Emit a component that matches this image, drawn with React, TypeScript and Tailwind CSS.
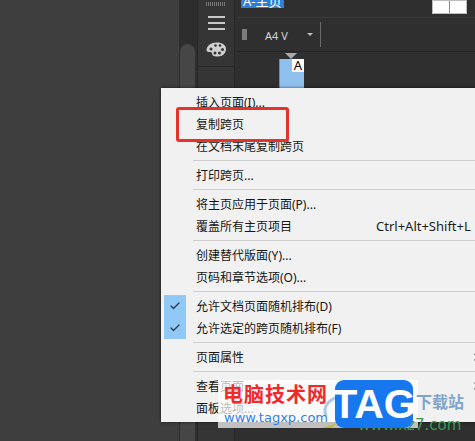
import { Check, ChevronRight } from 'lucide-react';

type MenuRow = { label: string; shortcut?: string; checked?: boolean; submenu?: boolean };

const groups: MenuRow[][] = [
    [{ label: '插入页面(I)...' }, { label: '复制跨页' }, { label: '在文档末尾复制跨页' }],
    [{ label: '打印跨页...' }],
    [{ label: '将主页应用于页面(P)...' }, { label: '覆盖所有主页项目', shortcut: 'Ctrl+Alt+Shift+L' }],
    [{ label: '创建替代版面(Y)...' }, { label: '页码和章节选项(O)...' }],
    [
        { label: '允许文档页面随机排布(D)', checked: true },
        { label: '允许选定的跨页随机排布(F)', checked: true },
    ],
    [{ label: '页面属性', submenu: true }],
    [{ label: '查看页面', submenu: true }, { label: '面板选项...' }],
];

function Row({ row }: { row: MenuRow }) {
    return (
        <div className="flex h-[22px] items-center">
            <div className={row.checked ? 'flex h-full w-[22px] items-center justify-center bg-[#90c8f6]' : 'h-full w-[22px]'}>
                {row.checked && <Check className="h-3 w-3 text-[#2a3a4a]" strokeWidth={2.5} />}
            </div>
            <span className="ml-[10px] pt-[2px] text-xs text-[#161616]">{row.label}</span>
            {row.shortcut && <span className="absolute left-[215px] pt-[2px] text-[13px] text-[#1c1c1c]">{row.shortcut}</span>}
            {row.submenu && <ChevronRight className="absolute left-[309px] h-3 w-3 text-[#333333]" />}
        </div>
    );
}

function PaletteIcon() {
    return (
        <svg width="20" height="15" viewBox="0 0 20 15">
            <path
                d="M11 0.5C5 0.5 0.5 4 0.5 8c0 2 2.5 2 4 2 1.5 0 1.5 1.5 2 3 .5 1.5 3 1.5 5.5 1.5 4.5 0 8-3 8-7.500C20 3 16 .5 11 .5z"
                fill="#cfcfcf"
            />
            <circle cx="5" cy="7" r="1.5" fill="#333333" />
            <circle cx="9" cy="11" r="1.5" fill="#333333" />
            <circle cx="13.5" cy="11" r="1.5" fill="#333333" />
            <circle cx="16.5" cy="7.5" r="1.5" fill="#333333" />
            <circle cx="9.5" cy="3.5" r="1.3" fill="#333333" />
            <circle cx="14" cy="3.5" r="1.3" fill="#333333" />
        </svg>
    );
}

function Swoosh() {
    return (
        <svg className="absolute left-[318px] top-[392px]" width="30" height="40" viewBox="0 0 30 40" fill="none">
            <path d="M8 24C4 14 12 6 24 4" stroke="#a9cbe6" strokeWidth="3" />
            <path d="M3 36l16-5-5 5z" fill="#c9b84a" />
        </svg>
    );
}

export default function App() {
    return (
        <div className="relative flex h-[441px] w-[475px] overflow-hidden bg-[#2f2f2f] font-['Noto_Sans','Noto_Sans_CJK_SC',sans-serif]">
            <div className="w-[179px] bg-[#3e3e3e]" />

            <div className="w-[17px] bg-[#2d2d2d] px-px pt-[44px]">
                <div className="h-full rounded-t-full bg-[#464646]" />
            </div>

            <div className="ml-px flex w-[38px] flex-col items-center border-x border-[#262626] bg-[#353535]">
                <div className="mt-[2px] h-[4px] w-[20px] bg-[repeating-linear-gradient(90deg,#777777_0,#777777_1px,transparent_1px,transparent_2px)]" />
                <div className="mt-[10px] flex w-[17px] flex-col gap-[4px]">
                    <div className="h-[2px] bg-[#c8c8c8]" />
                    <div className="h-[2px] bg-[#c8c8c8]" />
                    <div className="h-[2px] bg-[#c8c8c8]" />
                </div>
                <div className="mt-[12px]">
                    <PaletteIcon />
                </div>
                <div className="mt-[9px] w-full border-t border-[#262626]" />
            </div>

            <div className="ml-[3px] flex-1 bg-[#2f2f2f]">
                <div className="flex h-[17px] justify-between">
                    <div className="ml-[3px] h-[8px] overflow-hidden bg-[#2f7fd6] px-[2px] text-[13px] leading-[8px] text-white">
                        <span className="relative top-[-3px]">A-主页</span>
                    </div>
                    <div className="mr-[8px] flex h-[14px] w-[35px] gap-px border border-[#bdbdbd] bg-[#8a8a8a]">
                        <div className="flex-1 bg-white" />
                        <div className="flex-1 bg-white" />
                    </div>
                </div>
                <div className="flex h-[35px] items-center border-y border-[#3a3a3a] border-b-[#232323]">
                    <div className="ml-[4px] h-[11px] w-[5px] bg-[#7d7d7d]" />
                    <span className="ml-[18px] pt-[3px] text-[11px] text-[#d4d4d4]">A4 V</span>
                    <div className="ml-[19px] h-0 w-0 border-x-[3px] border-t-[3px] border-x-transparent border-t-[#bdbdbd]" />
                    <div className="ml-[7px] h-[25px] w-px bg-[#6a6a6a]" />
                </div>
                <div className="ml-[41px] w-[25px] pt-px">
                    <div className="ml-[6px] h-0 w-0 border-x-[6px] border-t-[6px] border-x-transparent border-t-[#a8a8a8]" />
                    <div className="h-[30px] border-l border-[#888888] bg-[#90c0ee]">
                        <div className="ml-auto flex h-[13px] w-[12px] items-center justify-center bg-white text-[13px] leading-none text-black">
                            A
                        </div>
                    </div>
                </div>
            </div>

            <div className="absolute left-[161px] top-[88px] h-[334px] w-[330px] bg-[#f1f1f1] py-[3px] pl-[3px] shadow-[0_0_3px_rgba(0,0,0,0.6)]">
                {groups.map((group, index) => (
                    <div key={index}>
                        {index > 0 && <div className="my-[3px] ml-[29px] h-px bg-[#cfcfcf]" />}
                        {group.map((row) => (
                            <Row key={row.label} row={row} />
                        ))}
                    </div>
                ))}
            </div>

            <div className="absolute left-[176px] top-[107px] h-[35px] w-[113px] rounded-[3px] border-[3px] border-[#e5332a]" />

            <div className="absolute left-[218px] top-[380px] h-[48px] w-[200px] bg-white/70" />
            <Swoosh />
            <span className="absolute left-[223px] top-[383px] text-[20px] font-bold leading-[24px] tracking-[1px] text-[#f02a2a]">
                电脑技术网
            </span>
            <span className="absolute left-[224px] top-[409px] font-['DejaVu_Sans',sans-serif] text-[13px] leading-[18px] text-[#2f80ee]">
                www.tagxp.com
            </span>
            <span className="absolute left-[416px] top-[391px] text-[16px] font-bold leading-[22px] text-[#7ea6cc]">下载站</span>
            <span className="absolute left-[358px] top-[416px] font-['DejaVu_Sans',sans-serif] text-[15px] leading-[18px] text-[#3a9a55]">
                www.xz7.com
            </span>
            <div className="absolute left-[335px] top-[380px] flex h-[48px] w-[78px] items-center justify-center rounded-[9px] bg-[#1677ee] font-['Liberation_Sans',sans-serif] text-[41px] leading-none font-bold text-white">
                TAG
            </div>
        </div>
    );
}
